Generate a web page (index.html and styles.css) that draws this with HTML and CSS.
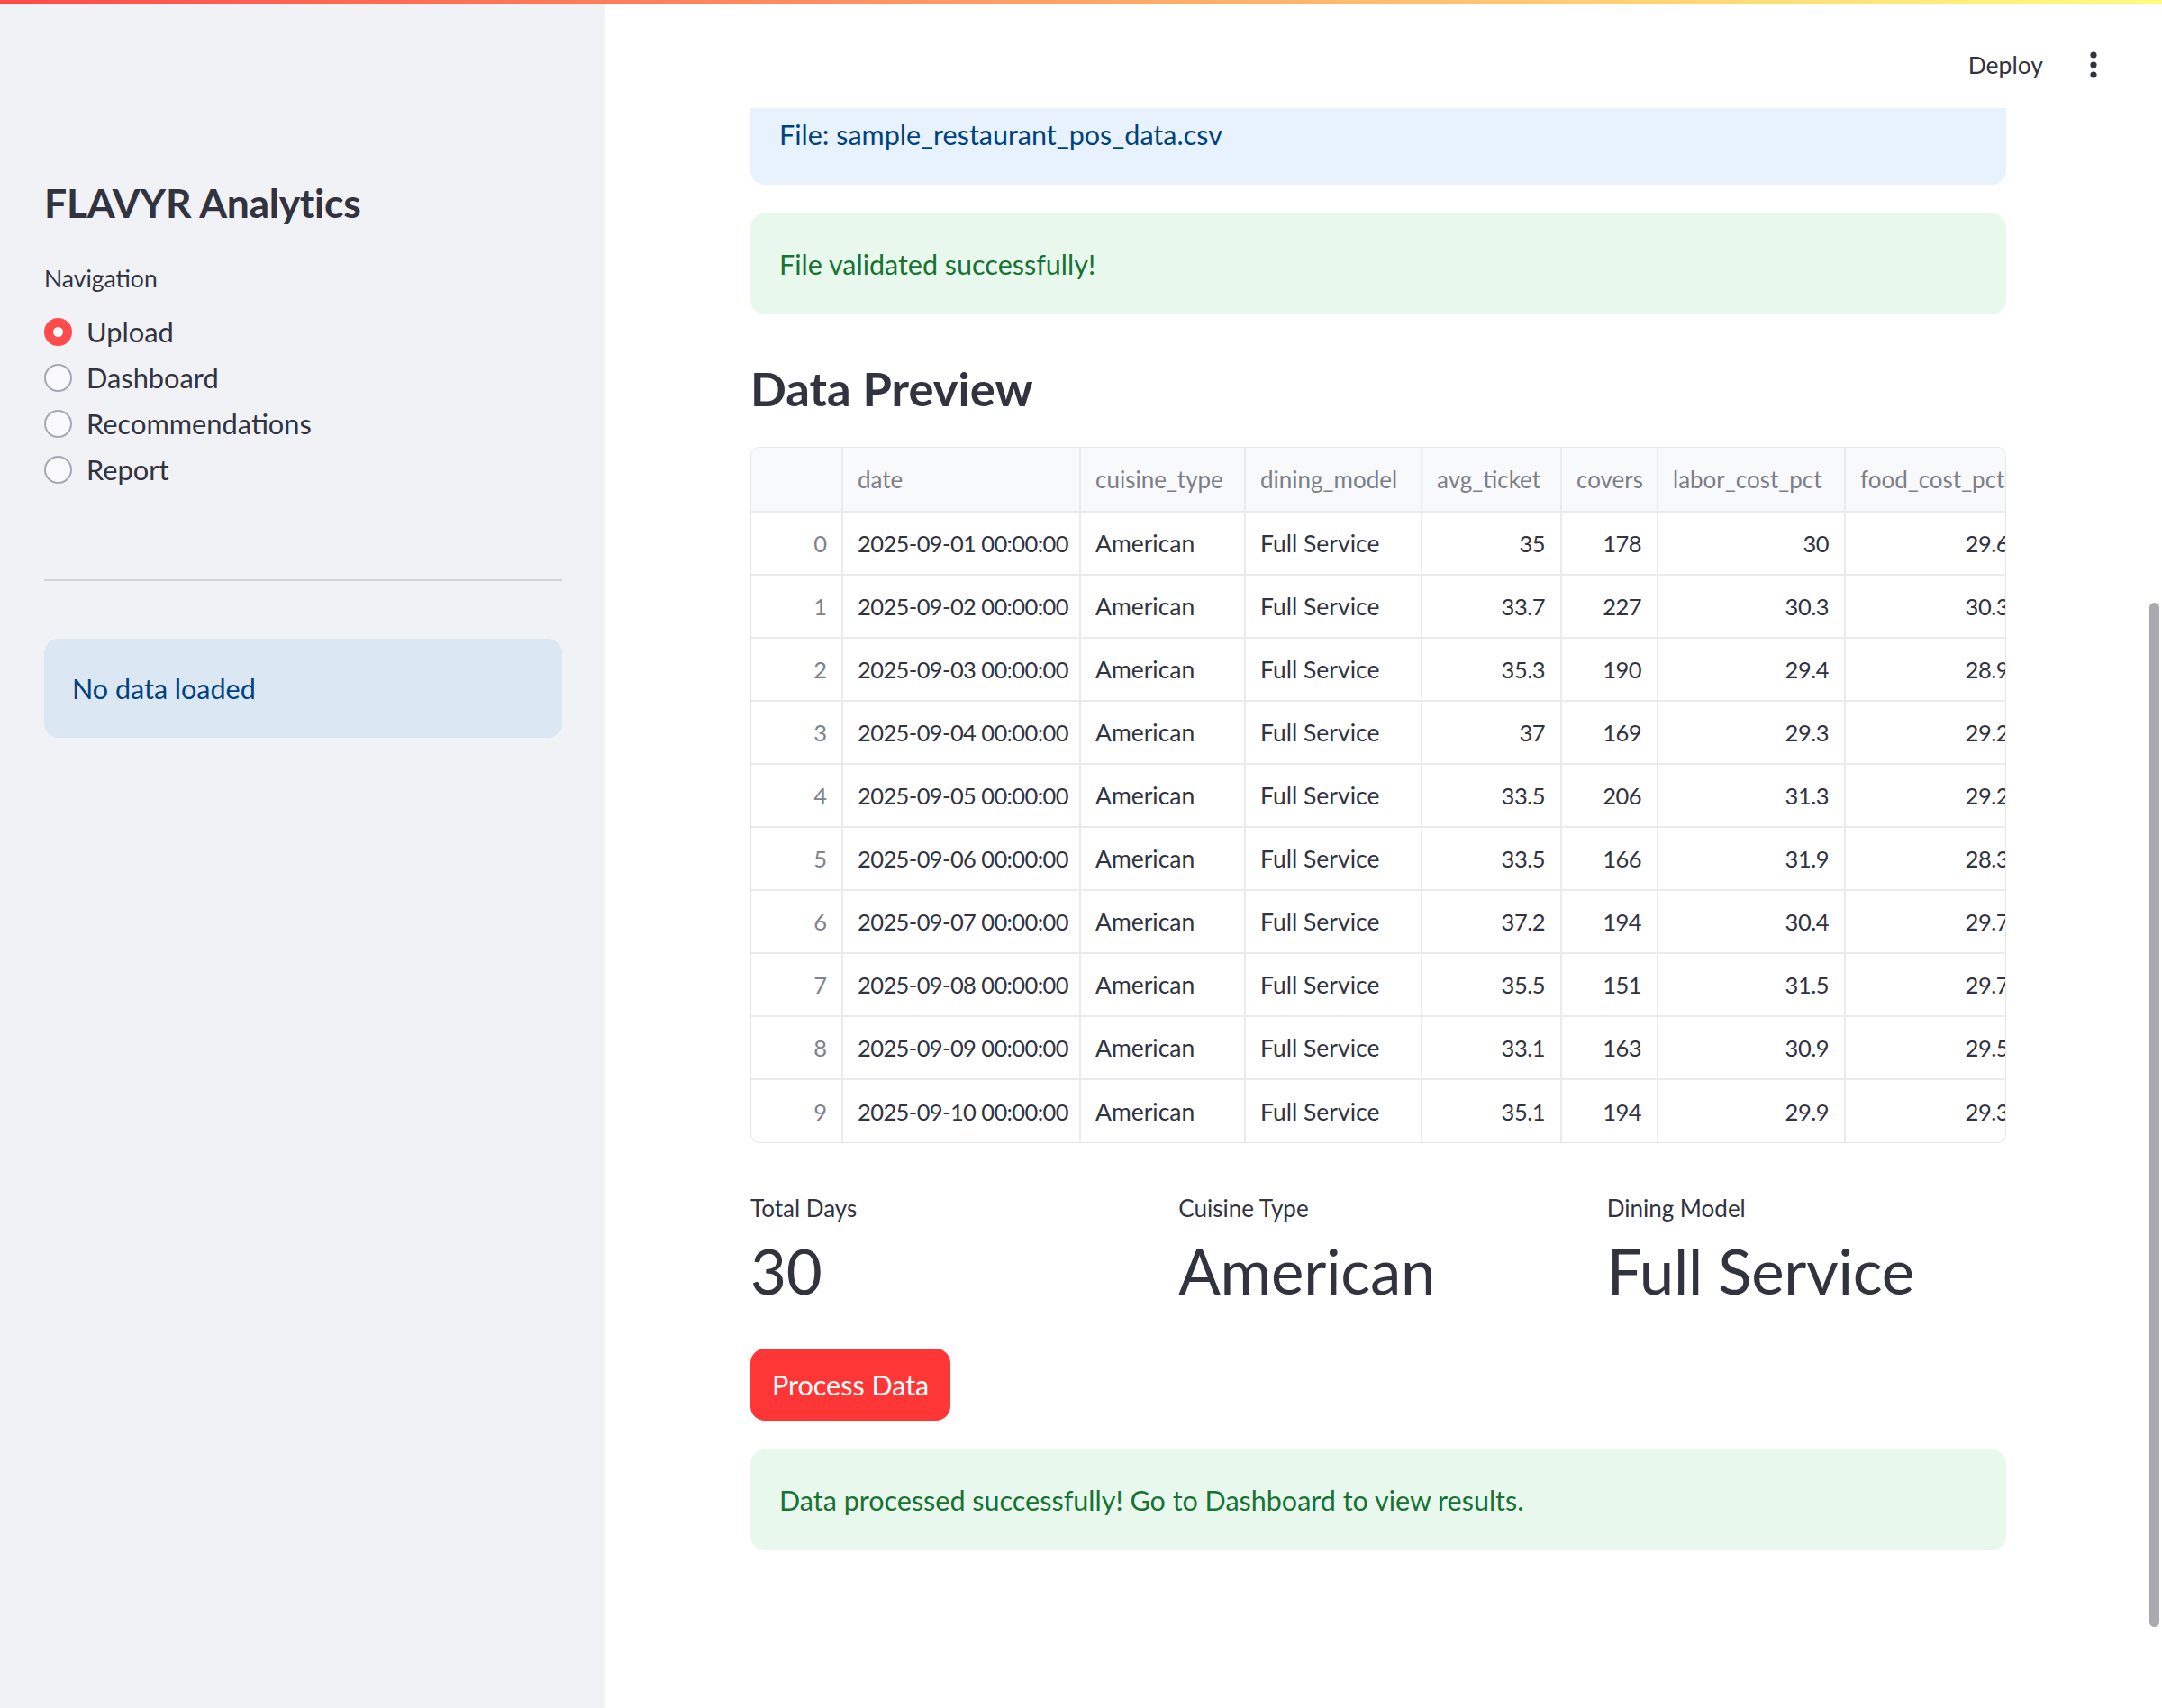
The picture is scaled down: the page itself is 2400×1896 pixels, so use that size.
FILE: index.html
```html
<!DOCTYPE html>
<html lang="en">
<head>
<meta charset="utf-8">
<title>FLAVYR Analytics</title>
<link rel="stylesheet" href="styles.css">
</head>
<body>
<div class="decoration"></div>
<div class="app">
  <aside class="sidebar">
    <h1 class="side-title">FLAVYR Analytics</h1>
    <div class="nav-label">Navigation</div>
    <div class="radio-group">
      <div class="radio selected"><span class="dot"></span><span>Upload</span></div>
      <div class="radio"><span class="dot"></span><span>Dashboard</span></div>
      <div class="radio"><span class="dot"></span><span>Recommendations</span></div>
      <div class="radio"><span class="dot"></span><span>Report</span></div>
    </div>
    <hr class="divider">
    <div class="alert info side-alert">No data loaded</div>
  </aside>
  <main class="main">
    <header class="toolbar">
      <span class="deploy">Deploy</span>
      <svg class="menu" width="12" height="32" viewBox="0 0 12 32"><circle cx="6" cy="5" r="3.6" fill="#31333f"/><circle cx="6" cy="16" r="3.6" fill="#31333f"/><circle cx="6" cy="27" r="3.6" fill="#31333f"/></svg>
    </header>
    <div class="block">
      <div class="alert info">File: sample_restaurant_pos_data.csv</div>
      <div class="alert success">File validated successfully!</div>
      <h3 class="heading">Data Preview</h3>
      <div class="grid-wrap">
        <table class="grid">
          <colgroup>
            <col class="c-idx"><col class="c-date"><col class="c-cuis"><col class="c-din"><col class="c-avg"><col class="c-cov"><col class="c-lab"><col class="c-food">
          </colgroup>
          <thead>
            <tr><th></th><th>date</th><th>cuisine_type</th><th>dining_model</th><th>avg_ticket</th><th>covers</th><th>labor_cost_pct</th><th>food_cost_pct</th></tr>
          </thead>
          <tbody>
            <tr><td class="idx">0</td><td class="dt">2025-09-01 00:00:00</td><td>American</td><td>Full Service</td><td class="num">35</td><td class="num">178</td><td class="num">30</td><td class="num">29.6</td></tr>
            <tr><td class="idx">1</td><td class="dt">2025-09-02 00:00:00</td><td>American</td><td>Full Service</td><td class="num">33.7</td><td class="num">227</td><td class="num">30.3</td><td class="num">30.3</td></tr>
            <tr><td class="idx">2</td><td class="dt">2025-09-03 00:00:00</td><td>American</td><td>Full Service</td><td class="num">35.3</td><td class="num">190</td><td class="num">29.4</td><td class="num">28.9</td></tr>
            <tr><td class="idx">3</td><td class="dt">2025-09-04 00:00:00</td><td>American</td><td>Full Service</td><td class="num">37</td><td class="num">169</td><td class="num">29.3</td><td class="num">29.2</td></tr>
            <tr><td class="idx">4</td><td class="dt">2025-09-05 00:00:00</td><td>American</td><td>Full Service</td><td class="num">33.5</td><td class="num">206</td><td class="num">31.3</td><td class="num">29.2</td></tr>
            <tr><td class="idx">5</td><td class="dt">2025-09-06 00:00:00</td><td>American</td><td>Full Service</td><td class="num">33.5</td><td class="num">166</td><td class="num">31.9</td><td class="num">28.3</td></tr>
            <tr><td class="idx">6</td><td class="dt">2025-09-07 00:00:00</td><td>American</td><td>Full Service</td><td class="num">37.2</td><td class="num">194</td><td class="num">30.4</td><td class="num">29.7</td></tr>
            <tr><td class="idx">7</td><td class="dt">2025-09-08 00:00:00</td><td>American</td><td>Full Service</td><td class="num">35.5</td><td class="num">151</td><td class="num">31.5</td><td class="num">29.7</td></tr>
            <tr><td class="idx">8</td><td class="dt">2025-09-09 00:00:00</td><td>American</td><td>Full Service</td><td class="num">33.1</td><td class="num">163</td><td class="num">30.9</td><td class="num">29.5</td></tr>
            <tr><td class="idx">9</td><td class="dt">2025-09-10 00:00:00</td><td>American</td><td>Full Service</td><td class="num">35.1</td><td class="num">194</td><td class="num">29.9</td><td class="num">29.3</td></tr>
          </tbody>
        </table>
      </div>
      <div class="metrics">
        <div class="metric"><div class="m-label">Total Days</div><div class="m-value">30</div></div>
        <div class="metric"><div class="m-label">Cuisine Type</div><div class="m-value">American</div></div>
        <div class="metric"><div class="m-label">Dining Model</div><div class="m-value">Full Service</div></div>
      </div>
      <div><button class="btn-primary">Process Data</button></div>
      <div class="alert success">Data processed successfully! Go to Dashboard to view results.</div>
    </div>
    <div class="scroll-thumb"></div>
  </main>
</div>
</body>
</html>
```

FILE: styles.css
```css
* { box-sizing: border-box; }
html, body {
  margin: 0;
  padding: 0;
  width: 2400px;
  height: 1896px;
  overflow: hidden;
  background: #ffffff;
  font-family: Lato, "Noto Sans", sans-serif;
  color: #31333f;
}
.decoration {
  position: absolute;
  top: 0; left: 0; right: 0;
  height: 4px;
  background: linear-gradient(90deg, #ff4b4b, #fffd80);
  z-index: 10;
}
.app {
  display: flex;
  height: 1896px;
}

/* Sidebar */
.sidebar {
  width: 672px;
  flex: 0 0 672px;
  background: #f0f2f6;
  padding: 198px 48px 0 49px;
  display: flex;
  flex-direction: column;
}
.side-title {
  margin: 0;
  font-size: 44.5px;
  font-weight: 700;
  line-height: 54px;
  letter-spacing: -0.3px;
  color: #31333f;
}
.nav-label {
  margin-top: 37px;
  font-size: 26.5px;
  line-height: 40px;
}
.radio-group {
  margin-top: 14px;
  display: flex;
  flex-direction: column;
}
.radio {
  display: flex;
  align-items: center;
  height: 51px;
  font-size: 30.8px;
  gap: 16px;
}
.radio .dot {
  width: 31px;
  height: 31px;
  border-radius: 50%;
  border: 2px solid #a6a9b3;
  background: #f9f9fb;
  flex: 0 0 31px;
}
.radio.selected .dot {
  border: 10px solid #ff4b4b;
  background: #ffffff;
}
.divider {
  margin: 96px 0 0 0;
  border: 0;
  height: 2px;
  background: #d3d5da;
}
.alert {
  border-radius: 16px;
  padding: 32px 32px;
  font-size: 30.5px;
  line-height: 48px;
}
.alert.info {
  background: #e8f2fc;
  color: #004280;
}
.alert.success {
  background: #e8f8ed;
  color: #177233;
}
.side-alert {
  margin-top: 64px;
  padding: 31px 31px;
  background: #dce7f4 !important;
}

/* Main */
.main {
  flex: 1;
  position: relative;
  overflow: hidden;
}
.toolbar {
  position: absolute;
  top: 0; left: 0; right: 0;
  height: 120px;
  background: #ffffff;
  z-index: 5;
  display: flex;
  justify-content: flex-end;
  align-items: center;
  padding: 24px 70px 0 0;
  gap: 50px;
}
.deploy {
  font-size: 26.5px;
  color: #31333f;
}
.menu { display: block; }
.block {
  width: 1394px;
  margin: 0 auto;
  padding-top: 93px;
  display: flex;
  flex-direction: column;
  gap: 32px;
  position: relative;
  left: -6px;
}
.heading {
  margin: 0;
  padding-top: 16px;
  font-size: 52.5px;
  line-height: 67px;
  font-weight: 700;
  color: #31333f;
}

/* Grid */
.grid-wrap {
  width: 1394px;
  border: 1px solid #e6e6e9;
  border-radius: 10px;
  overflow: hidden;
}
.grid {
  border-collapse: collapse;
  table-layout: fixed;
  width: 1414px;
  font-size: 26px;
}
.c-idx { width: 101px; }
.c-date { width: 264px; }
.c-cuis { width: 183px; }
.c-din { width: 196px; }
.c-avg { width: 155px; }
.c-cov { width: 107px; }
.c-lab { width: 208px; }
.c-food { width: 200px; }
.grid th, .grid td {
  height: 70px;
  padding: 0 16px;
  border-right: 2px solid #ebebed;
  border-bottom: 2px solid #ebebed;
  white-space: nowrap;
  overflow: hidden;
}
.grid th {
  background: #f8f9fb;
  color: #7c7e88;
  font-weight: 400;
  text-align: left;
  height: 71px;
}
.grid tbody tr:last-child td { border-bottom: 0; }
.grid td {
  color: #31333f;
  font-size: 26.5px;
}
.grid td.dt {
  font-size: 25.5px;
  letter-spacing: -0.6px;
}
.grid td.idx { color: #808289; text-align: right; font-size: 25.5px; }
.grid td.num {
  text-align: right;
  padding-right: 17px;
  font-size: 25.5px;
  letter-spacing: -0.5px;
}

/* Metrics */
.metrics {
  margin-top: 16px;
  padding-bottom: 8px;
  display: grid;
  grid-template-columns: repeat(3, 1fr);
  gap: 32px;
}
.m-label {
  font-size: 26px;
  line-height: 48px;
}
.m-value {
  font-size: 69px;
  line-height: 92px;
  letter-spacing: -0.3px;
}
.btn-primary {
  height: 80px;
  padding: 0 24px;
  border: 0;
  border-radius: 16px;
  background: #ff3636;
  color: #ffffff;
  font-family: Lato, "Noto Sans", sans-serif;
  font-size: 30.5px;
}
.scroll-thumb {
  position: absolute;
  right: 3px;
  top: 669px;
  width: 11px;
  height: 1137px;
  border-radius: 6px;
  background: #aaaaae;
}
```
